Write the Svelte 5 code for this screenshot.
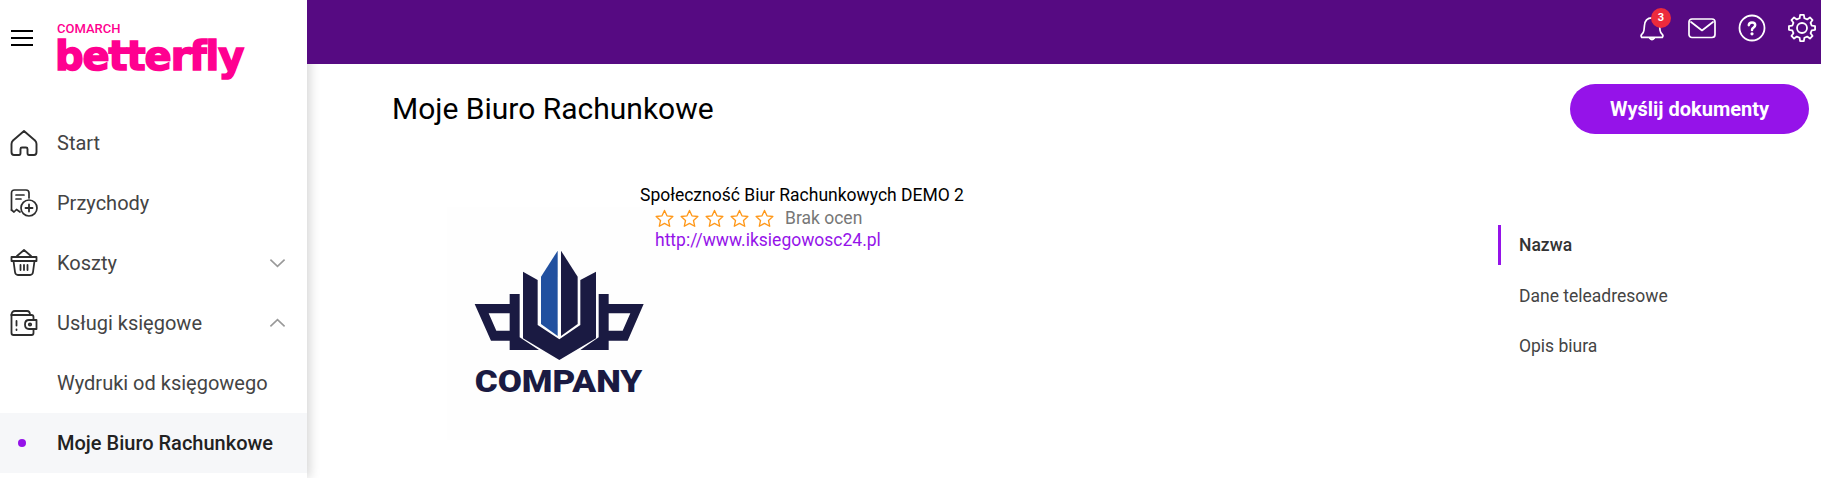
<script>
  const stars = [0, 1, 2, 3, 4];
  const sections = [
    { label: 'Nazwa', active: true },
    { label: 'Dane teleadresowe', active: false },
    { label: 'Opis biura', active: false }
  ];

  // cog outline, 8 teeth
  function gearPath(cx, cy, outer, inner) {
    const teeth = 8;
    const pts = [];
    for (let i = 0; i < teeth; i++) {
      const a = (i / teeth) * Math.PI * 2;
      const step = Math.PI / teeth;
      const corners = [
        [inner, a - step * 0.62],
        [outer, a - step * 0.36],
        [outer, a + step * 0.36],
        [inner, a + step * 0.62]
      ];
      for (const [r, t] of corners) {
        pts.push((cx + r * Math.sin(t)).toFixed(2) + ' ' + (cy - r * Math.cos(t)).toFixed(2));
      }
    }
    return 'M' + pts.join(' L') + ' Z';
  }
  const gear = gearPath(14, 14, 13.2, 10);
</script>

<div class="layout">
  <aside class="sidebar">
    <div class="brand">
      <button class="burger" aria-label="Menu">
        <span></span><span></span><span></span>
      </button>
      <div class="logo">
        <div class="logo-top">COMARCH</div>
        <div class="logo-name">betterfly</div>
      </div>
    </div>

    <nav class="menu">
      <div class="item">
        <svg class="ico" viewBox="0 0 28 28" fill="none" stroke="#2d2d2d" stroke-width="1.9" stroke-linejoin="round" stroke-linecap="round">
          <path d="M14 2 L3 11.5 Q1.5 13 1.5 15 V23 Q1.5 26 4 26 H9 Q10.5 26 10.5 24 V20 Q10.5 18.5 12 18.5 H16 Q17.5 18.5 17.5 20 V24 Q17.5 26 19 26 H24 Q26.5 26 26.5 23 V15 Q26.5 13 25 11.5 Z"/>
        </svg>
        <span>Start</span>
      </div>
      <div class="item">
        <svg class="ico" viewBox="0 0 28 28" fill="none" stroke="#2d2d2d" stroke-width="1.7" stroke-linecap="round" stroke-linejoin="round">
          <path d="M1.5 21 V4 Q1.5 1 4.5 1 H16 Q19 1 19 4 V9"/>
          <path d="M6 6 H14 M6 10 H11"/>
          <path d="M1.5 21 L4 23 L6.5 20.5 L10 23"/>
          <circle cx="19" cy="19" r="8"/>
          <path d="M19 15.5 V22.5 M15.5 19 H22.5" stroke-width="1.8"/>
        </svg>
        <span>Przychody</span>
      </div>
      <div class="item">
        <svg class="ico" viewBox="0 0 28 28" fill="none" stroke="#2d2d2d" stroke-width="1.8" stroke-linecap="round" stroke-linejoin="round">
          <path d="M7 7 L14 1 L21 7"/>
          <path d="M1.5 8 H26.5 V12 H1.5 Z"/>
          <path d="M3.5 12 L5 23 Q5.4 26 8 26 H20 Q22.6 26 23 23 L24.5 12"/>
          <path d="M10.5 16 V21 M14 16 V21 M17.5 16 V21"/>
        </svg>
        <span>Koszty</span>
        <svg class="chev" viewBox="0 0 18 10" fill="none" stroke="#999" stroke-width="1.7"><path d="M1.5 1.5 L9 8.5 L16.5 1.5"/></svg>
      </div>
      <div class="item">
        <svg class="ico" viewBox="0 0 28 28" fill="none" stroke="#2d2d2d" stroke-width="1.8" stroke-linecap="round" stroke-linejoin="round">
          <path d="M1.5 6 V24 Q1.5 26 3.5 26 H21.5 Q23.5 26 23.5 24 V20"/>
          <path d="M23.5 11 V8 Q23.5 6 21.5 6 H1.5"/>
          <path d="M1.5 6 Q1.5 2 5 2 H17 Q20 2 20 6"/>
          <path d="M19 11 H26.5 V20 H19 Q15 20 15 15.5 Q15 11 19 11 Z"/>
          <circle cx="20" cy="15.5" r="1.2"/>
          <path d="M6.5 12 V16.5 M6.5 20.5 V21"/>
        </svg>
        <span>Usługi księgowe</span>
        <svg class="chev" viewBox="0 0 18 10" fill="none" stroke="#999" stroke-width="1.7"><path d="M1.5 8.5 L9 1.5 L16.5 8.5"/></svg>
      </div>
      <div class="item sub"><span>Wydruki od księgowego</span></div>
      <div class="item sub active"><i class="dot"></i><span>Moje Biuro Rachunkowe</span></div>
    </nav>
  </aside>

  <div class="page">
    <header class="topbar">
      <div class="top-icon bell">
        <svg viewBox="0 0 28 28" fill="none" stroke="#fff" stroke-width="1.9" stroke-linecap="round" stroke-linejoin="round">
          <path d="M14 2 Q6 2 5.5 11 L5 16 Q4.8 18.5 2.5 20.5 Q1 22 2.5 24 H25.5 Q27 22 25.5 20.5 Q23.2 18.5 23 16 L22.5 11 Q22 2 14 2 Z"/>
          <path d="M11.5 25 Q14 28 16.5 25" fill="#fff"/>
        </svg>
        <b class="badge">3</b>
      </div>
      <div class="top-icon">
        <svg viewBox="0 0 28 28" fill="none" stroke="#fff" stroke-width="1.7" stroke-linejoin="round" stroke-linecap="round">
          <rect x="1" y="5" width="26" height="18.5" rx="3"/>
          <path d="M3 8 L14 16.5 L25 8"/>
        </svg>
      </div>
      <div class="top-icon">
        <svg viewBox="0 0 28 28" fill="none" stroke="#fff" stroke-width="1.8" stroke-linecap="round">
          <circle cx="14" cy="14" r="12.5"/>
          <path d="M10.8 11.2 Q11 8.4 14 8.4 Q17.2 8.4 17.2 11 Q17.2 12.6 15.5 13.6 Q14 14.4 14 16" stroke-width="2.5"/>
          <circle cx="14" cy="19.8" r="1.6" fill="#fff" stroke="none"/>
        </svg>
      </div>
      <div class="top-icon">
        <svg viewBox="0 0 28 28" fill="none" stroke="#fff" stroke-width="1.8" stroke-linejoin="round">
          <path d={gear}/>
          <circle cx="14" cy="14" r="5"/>
        </svg>
      </div>
    </header>

    <main class="content">
      <div class="head">
        <h1>Moje Biuro Rachunkowe</h1>
        <button class="send">Wyślij dokumenty</button>
      </div>

      <div class="details">
        <div class="company">
          <div class="company-logo">
            <svg viewBox="20 -69 669 699" aria-label="Company logo">
              <path fill="#1a1a42" d="M362 62 L412 140 V282 L362 318 Z"/>
              <path fill="#21509f" d="M352 62 L302 140 V282 L352 318 Z"/>
              <path fill="#1a1a42" d="M248 125 L292 150 V285 L357 328 L420 285 V150 L467 125 V325 L357 390 L248 325 Z"/>
              <path fill="#1a1a42" fill-rule="evenodd" d="M208 192 H238 V322 L296 360 H208 V332 H152 L103 222 H208 Z M145 250 H208 V302 H168 Z"/>
              <path fill="#1a1a42" fill-rule="evenodd" d="M505 192 H475 V322 L420 360 H505 V332 H562 L610 222 H505 Z M570 250 H505 V302 H547 Z"/>
              <text x="103" y="486" class="company-word" textLength="503" lengthAdjust="spacingAndGlyphs">COMPANY</text>
            </svg>
          </div>
          <div class="company-info">
            <div class="company-name">Społeczność Biur Rachunkowych DEMO 2</div>
            <div class="rating">
              {#each stars as s}
                <svg class="star" viewBox="0 0 20 20" fill="none" stroke="#ff9819" stroke-width="1.4" stroke-linejoin="round">
                  <path d="M10 1.5 L12.6 7.2 L18.8 7.9 L14.2 12.1 L15.5 18.2 L10 15.1 L4.5 18.2 L5.8 12.1 L1.2 7.9 L7.4 7.2 Z"/>
                </svg>
              {/each}
              <span class="no-rating">Brak ocen</span>
            </div>
            <a class="site" href="http://www.iksiegowosc24.pl">http://www.iksiegowosc24.pl</a>
          </div>
        </div>

        <ul class="sections">
          {#each sections as section}
            <li class:current={section.active}>{section.label}</li>
          {/each}
        </ul>
      </div>
    </main>
  </div>
</div>

<style>
  :global(body) {
    margin: 0;
    background: #fff;
    overflow: hidden;
    font-family: Roboto, "Liberation Sans", sans-serif;
  }
  .layout {
    display: flex;
    height: 478px;
    overflow: hidden;
  }
  .sidebar {
    width: 307px;
    flex: none;
    background: #fff;
    box-shadow: 3px 0 10px rgba(0, 0, 0, 0.16);
    position: relative;
    z-index: 1;
  }
  .brand {
    display: flex;
    height: 113px;
    box-sizing: border-box;
    padding-left: 11px;
  }
  .burger {
    width: 22px;
    height: 16px;
    margin-top: 30px;
    padding: 0;
    border: 0;
    background: none;
    display: flex;
    flex-direction: column;
    justify-content: space-between;
  }
  .burger span {
    display: block;
    height: 2px;
    background: #000;
  }
  .logo {
    margin-left: 24px;
    padding-top: 23px;
    color: #ff0090;
  }
  .logo-top {
    font-size: 13px;
    line-height: 12px;
    font-weight: 500;
  }
  .logo-name {
    margin-left: -2px;
    font-family: "DejaVu Sans", sans-serif;
    font-size: 40px;
    line-height: 42px;
    font-weight: 700;
    letter-spacing: -1.1px;
    -webkit-text-stroke: 1.6px #ff0090;
  }
  .item {
    height: 60px;
    display: flex;
    align-items: center;
    padding: 0 21px 0 10px;
    font-size: 20px;
    color: #444;
    position: relative;
  }
  .ico {
    width: 28px;
    height: 28px;
    margin-right: 19px;
    flex: none;
  }
  .chev {
    width: 17px;
    height: 10px;
    margin-left: auto;
  }
  .sub {
    padding-left: 57px;
  }
  .active {
    background: #f6f7f9;
    color: #222;
    font-weight: 500;
  }
  .dot {
    position: absolute;
    left: 18px;
    top: 26px;
    width: 8px;
    height: 8px;
    border-radius: 50%;
    background: #9513e9;
  }
  .page {
    flex: 1;
    min-width: 0;
    position: relative;
  }
  .topbar {
    height: 64px;
    box-sizing: border-box;
    padding: 0 5px 8px 0;
    background: #560a82;
    display: flex;
    justify-content: flex-end;
    align-items: center;
    gap: 22px;
    position: relative;
    z-index: 2;
  }
  .top-icon {
    width: 28px;
    height: 28px;
    position: relative;
  }
  .top-icon svg {
    display: block;
    width: 28px;
    height: 28px;
  }
  .bell svg {
    height: 25px;
    margin-top: 2px;
  }
  .badge {
    position: absolute;
    left: 13px;
    top: -6px;
    width: 20px;
    height: 20px;
    border-radius: 50%;
    background: #ec2b3c;
    color: #fff;
    font-size: 11px;
    line-height: 20px;
    text-align: center;
  }
  .head {
    display: flex;
    justify-content: space-between;
    align-items: center;
    padding: 20px 12px 0 85px;
  }
  h1 {
    margin: -2px 0 0;
    font-size: 30px;
    font-weight: 400;
    color: #000;
  }
  .send {
    width: 239px;
    height: 50px;
    border: 0;
    border-radius: 25px;
    background: #9513e9;
    color: #fff;
    font: 700 20px Roboto, sans-serif;
  }
  .details {
    display: flex;
    justify-content: space-between;
    padding: 53px 0 0 140px;
  }
  .company {
    display: flex;
  }
  .company-logo {
    width: 223px;
    height: 233px;
    margin: 20px -30px 0 0;
    background: #fefefe;
  }
  .company-logo svg {
    display: block;
    width: 223px;
    height: 233px;
  }
  .company-word {
    font-family: Roboto, sans-serif;
    font-weight: 900;
    font-size: 92px;
    fill: #1a1a42;
  }
  .company-info {
    margin-top: -1px;
    font-size: 17.5px;
  }
  .company-name {
    color: #000;
    line-height: 19px;
    white-space: nowrap;
  }
  .rating {
    display: flex;
    align-items: center;
    height: 26px;
    padding-left: 15px;
    gap: 6px;
  }
  .star {
    width: 19px;
    height: 19px;
  }
  .no-rating {
    color: #777;
    margin-left: 5px;
  }
  .site {
    display: block;
    margin-left: 15px;
    line-height: 19px;
    color: #9513e9;
    text-decoration: none;
  }
  .sections {
    list-style: none;
    margin: 38px 0 0;
    padding: 0;
    width: 323px;
    font-size: 17.5px;
    color: #444;
  }
  .sections li {
    height: 40px;
    line-height: 40px;
    margin-bottom: 10.5px;
    padding-left: 18px;
    border-left: 3px solid transparent;
  }
  .sections li.current {
    border-left-color: #9513e9;
    font-weight: 500;
    color: #333;
  }
</style>
